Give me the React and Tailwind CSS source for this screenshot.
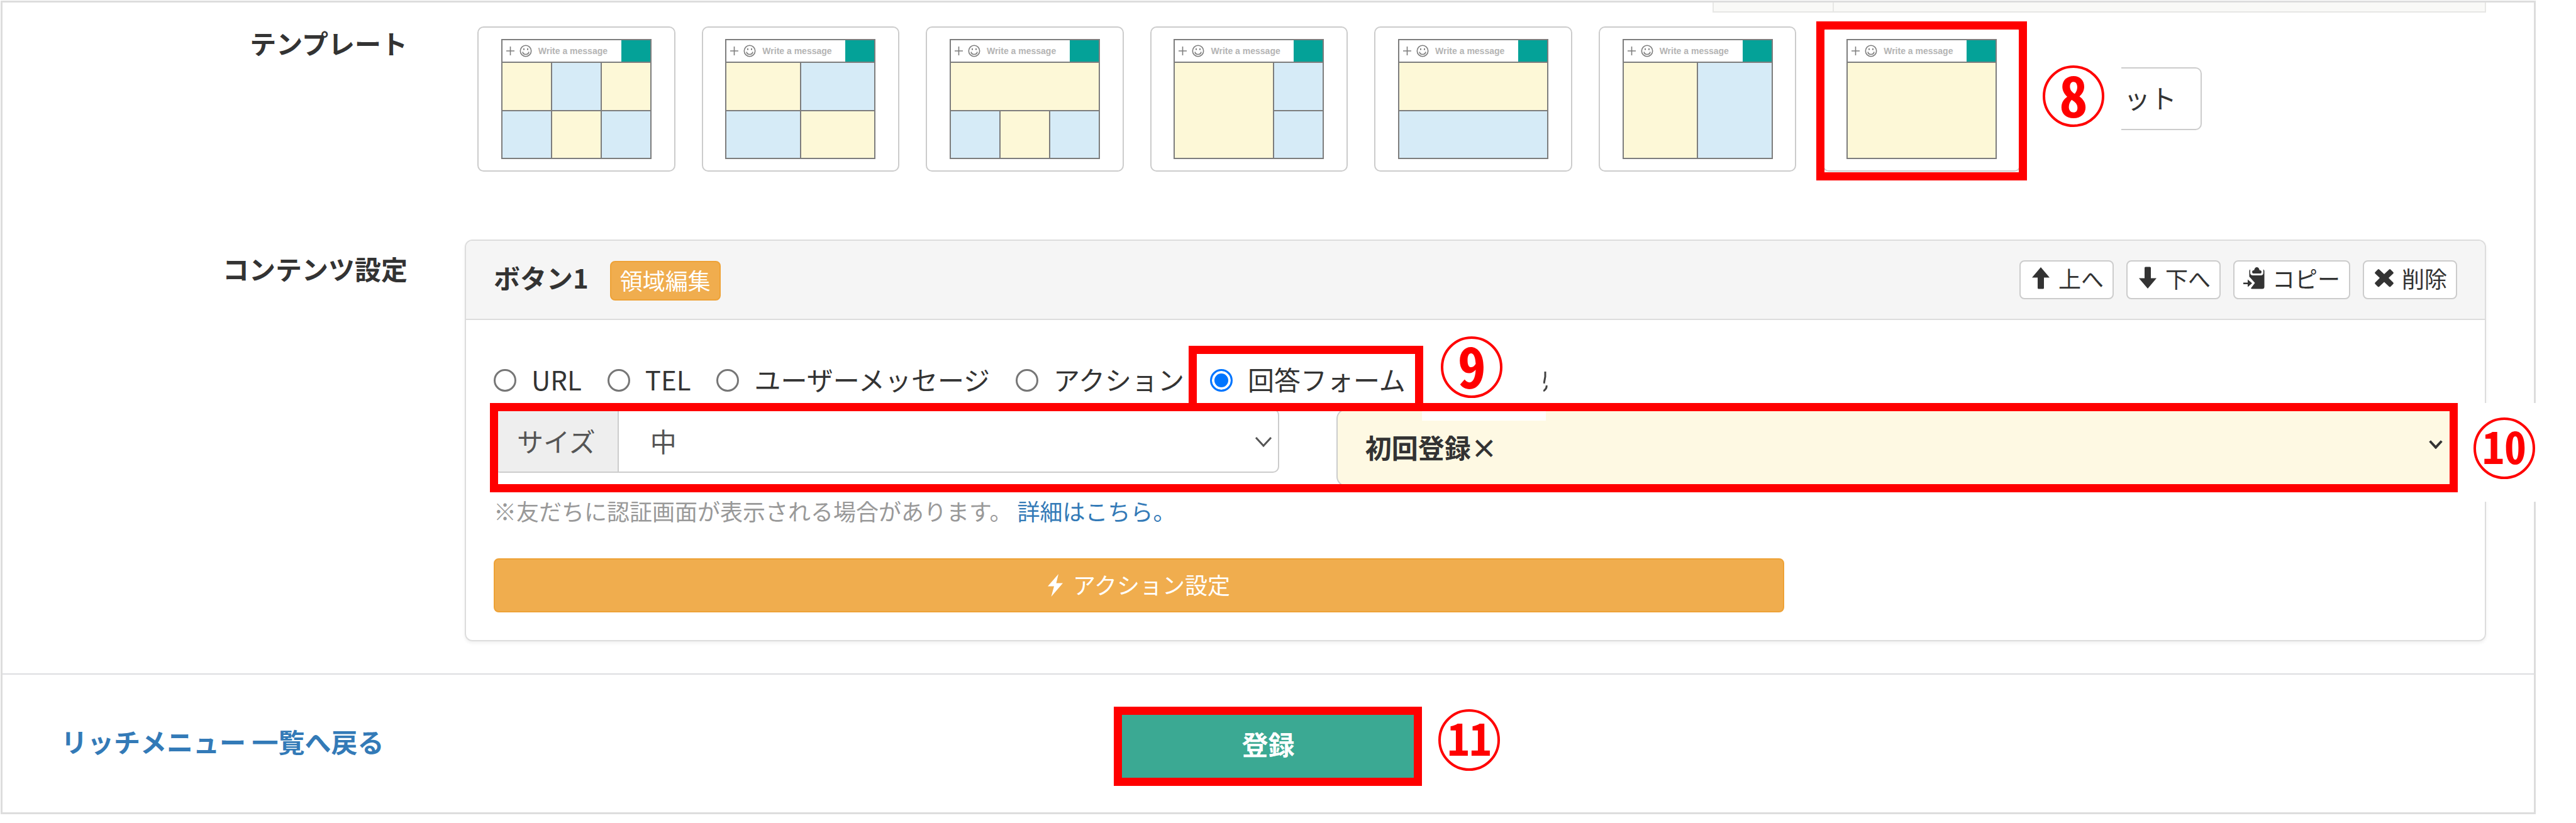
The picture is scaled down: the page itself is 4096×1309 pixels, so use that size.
import React, { useState } from "react";

const Y = "bg-[#fdf8d7]";
const B = "bg-[#d6ebf7]";

// area layouts of the rich menu, on a 6 x 2 grid
const TEMPLATES = [
  { id: "six", cells: [[Y, "col-span-2"], [B, "col-span-2"], [Y, "col-span-2"], [B, "col-span-2"], [Y, "col-span-2"], [B, "col-span-2"]] },
  { id: "four", cells: [[Y, "col-span-3"], [B, "col-span-3"], [B, "col-span-3"], [Y, "col-span-3"]] },
  { id: "top-three", cells: [[Y, "col-span-6"], [B, "col-span-2"], [Y, "col-span-2"], [B, "col-span-2"]] },
  { id: "left-two", cells: [[Y, "col-span-4 row-span-2"], [B, "col-span-2"], [B, "col-span-2"]] },
  { id: "rows", cells: [[Y, "col-span-6"], [B, "col-span-6"]] },
  { id: "columns", cells: [[Y, "col-span-3 row-span-2"], [B, "col-span-3 row-span-2"]] },
  { id: "single", cells: [[Y, "col-span-6 row-span-2"]] },
];

const TYPES = ["URL", "TEL", "ユーザーメッセージ", "アクション", "回答フォーム"];

function ArrowUp({ className }) {
  return (
    <svg viewBox="0 0 36 36" className={className} fill="currentColor" aria-hidden="true">
      <path d="M18 1 32 17.5H23V34q0 1.500-1.500 1.500H14.500q-1.500 0-1.500-1.500V17.500H4z" />
    </svg>
  );
}

function ArrowDown({ className }) {
  return (
    <svg viewBox="0 0 36 36" className={className} fill="currentColor" aria-hidden="true">
      <path d="M18 35 32 18.5H23V2q0-1.500-1.500-1.500H14.500q-1.500 0-1.500 1.500V18.500H4z" />
    </svg>
  );
}

function Paste({ className }) {
  return (
    <svg viewBox="0 0 36 36" className={className} fill="currentColor" aria-hidden="true">
      <path d="M16 11q-2 0-2-2.500t3.200-2.800q1-4.700 4.300-4.700t4.300 4.700q3.200.300 3.200 2.800t-2 2.500z" />
      <path d="M11 4.500q-1.500.700-1.500 2.500V16l9 10-6.500 8.500q.5 1 2 1H30q3.500 0 3.500-3.500V7q0-2-1.700-2.600V10q0 4-4 4H15.500q-4.500 0-4.500-4z" />
      <path d="M0 25.500H7V20.500l7 6-7 6v-4.500H0z" />
    </svg>
  );
}

function Remove({ className }) {
  return (
    <svg viewBox="0 0 36 36" className={className} fill="currentColor" aria-hidden="true">
      <path d="M10 4.500 18 12 26 4.500q1-.8 2 0l4.500 4.500q.8 1 0 2L25 18l7.500 7.500q.8 1 0 2L28 32q-1 .8-2 0L18 24.500 10 32q-1 .8-2 0L3.500 27.500q-.8-1 0-2L11 18 3.500 11q-.8-1 0-2L8 4.500q1-.8 2 0z" />
    </svg>
  );
}

function Bolt({ className }) {
  return (
    <svg viewBox="0 0 24 36" className={className} fill="currentColor" aria-hidden="true">
      <path d="M17 0 0 19.500H10L5.500 36 24 14.500H13.500z" />
    </svg>
  );
}

function Chevron({ className, strokeWidth }) {
  return (
    <svg viewBox="0 0 28 18" className={className} fill="none" stroke="currentColor" strokeWidth={strokeWidth} aria-hidden="true">
      <path d="M2 2 14 15 26 2" />
    </svg>
  );
}

// circled step number
function Mark({ children, className = "" }) {
  return (
    <span
      className={`absolute flex size-[98px] items-center justify-center rounded-full border-4 border-[#ff0000] pb-[10px] leading-none font-bold text-[#ff0000] [font-feature-settings:'hwid'] ${className}`}
    >
      {children}
    </span>
  );
}

function Frame({ className }) {
  return <span className={`pointer-events-none absolute border-[13px] border-[#ff0000] ${className}`} />;
}

function Thumb({ cells }) {
  return (
    <span className="flex h-[191px] w-[239px] flex-col gap-[2px] border-2 border-[#7d7d7d] bg-[#7d7d7d]">
      <span className="flex h-[34px] items-center bg-white pl-[5px]">
        <svg viewBox="0 0 44 20" className="h-5 w-11 shrink-0" fill="none" stroke="#7d7d7d" strokeWidth="1.6" aria-hidden="true">
          <path d="M1 10h13M7.500 3v14" />
          <circle cx="32" cy="10" r="8.700" />
          <path d="M27 11.500q.8 4 5 4t5-4" />
          <path d="M29 6v2.500M35 6v2.500" strokeWidth="2" />
        </svg>
        <span className="ml-2 flex-1 text-left font-['Liberation_Sans',Arial,sans-serif] text-[14px] leading-none font-bold whitespace-nowrap text-[#b4b4b4]">
          Write a message
        </span>
        <span className="h-full w-[46px] bg-[#04a298]" />
      </span>
      <span className="grid flex-1 grid-cols-6 grid-rows-2 gap-[2px]">
        {cells.map(([color, span], i) => (
          <span key={i} className={`${color} ${span}`} />
        ))}
      </span>
    </span>
  );
}

function TemplateRow() {
  const [selected, setSelected] = useState("single");

  return (
    <section className="flex pt-[22px]">
      <h2 className="-mt-1 w-[644px] shrink-0 text-right text-[42px] leading-[60px] font-bold">テンプレート</h2>
      <div className="ml-[111px] flex items-start">
        <div className="grid w-[2454px] shrink-0 grid-cols-7 gap-[42px]">
          {TEMPLATES.map((t) => (
            <button
              key={t.id}
              type="button"
              aria-label={`テンプレート ${t.id}`}
              aria-pressed={selected === t.id}
              onClick={() => setSelected(t.id)}
              className="relative flex h-[231px] items-center justify-center rounded-[10px] border-2 border-[#ccc] bg-white"
            >
              <Thumb cells={t.cells} />
              {selected === t.id ? <Frame className="-top-[10px] -right-[12px] -bottom-[16px] -left-[12px]" /> : null}
            </button>
          ))}
        </div>
        <div className="relative mt-[65px] ml-[160px]">
          <button
            type="button"
            className="h-[100px] rounded-r-[10px] border-2 border-l-0 border-[#ccc] bg-white pr-[38px] pb-1 pl-[4px] text-[42px] leading-[60px]"
          >
            ット
          </button>
          <Mark className="-top-[3px] -left-[125px] text-[90px]">8</Mark>
        </div>
      </div>
    </section>
  );
}

function SmallButton({ icon: Icon, children }) {
  return (
    <button
      type="button"
      className="flex h-[62px] items-center gap-[10px] rounded-[8px] border-2 border-[#ccc] bg-white px-[14px] pb-[6px] text-[36px] leading-[48px] text-[#333]"
    >
      <Icon className="size-9" />
      {children}
    </button>
  );
}

function ContentPanel() {
  const [type, setType] = useState("回答フォーム");

  return (
    <section className="mt-[108px] flex">
      <h2 className="mt-4 w-[644px] shrink-0 text-right text-[42px] leading-[60px] font-bold">コンテンツ設定</h2>
      <div className="mr-[76px] ml-[91px] flex-1 rounded-[12px] border-2 border-[#ddd] shadow-[0_3px_5px_rgba(0,0,0,0.06)]">
        <div className="flex h-[126px] items-center rounded-t-[10px] border-b-2 border-[#ddd] bg-[#f5f5f5] px-11">
          <h3 className="pb-2 text-[42px] leading-[60px] font-bold">ボタン1</h3>
          <button
            type="button"
            className="mt-[3px] ml-[34px] h-[63px] rounded-[8px] border-2 border-[#eea236] bg-[#f0ad4e] px-[14px] pb-1 text-[36px] leading-[48px] text-white"
          >
            領域編集
          </button>
          <div className="ml-auto flex gap-5">
            <SmallButton icon={ArrowUp}>上へ</SmallButton>
            <SmallButton icon={ArrowDown}>下へ</SmallButton>
            <SmallButton icon={Paste}>コピー</SmallButton>
            <SmallButton icon={Remove}>削除</SmallButton>
          </div>
        </div>

        <div className="px-11 pt-[66px] pb-11">
          <div className="relative flex h-[60px] items-center gap-[41px]">
            {TYPES.map((name) => (
              <label key={name} className="relative flex h-[60px] items-center gap-6 text-[42px] leading-[60px]">
                <input
                  type="radio"
                  name="type"
                  value={name}
                  checked={type === name}
                  onChange={() => setType(name)}
                  className="size-9 appearance-none rounded-full border-[3px] border-[#767676] bg-white checked:border-[#0075ff] checked:bg-[#0075ff] checked:shadow-[inset_0_0_0_4px_white]"
                />
                <span className="-mt-1">{name}</span>
                {type === name ? (
                  <>
                    <Frame className="-top-[25px] -right-[28px] -left-[34px] h-[104px]" />
                    <Mark className="-top-[40px] left-[367px] text-[90px]">9</Mark>
                    <svg viewBox="0 0 8 32" className="absolute top-4 left-[530px] h-8 w-2" fill="none" stroke="#444" strokeWidth="3" aria-hidden="true">
                      <path d="M3 0V8L1 19M5 22q1 5-5 9" />
                    </svg>
                  </>
                ) : null}
              </label>
            ))}
          </div>

          <div className="relative mt-[15px] flex items-start gap-[91px]">
            <div className="flex h-[102px] w-[40%] rounded-[10px] border-2 border-[#ccc] text-[42px] leading-[60px] text-[#555]">
              <label htmlFor="size" className="flex items-center rounded-l-[8px] border-r-2 border-[#ccc] bg-[#eee] px-[35px]">
                サイズ
              </label>
              <div className="relative flex-1">
                <select id="size" defaultValue="中" className="size-full appearance-none bg-transparent pl-[50px]">
                  <option>大</option>
                  <option>中</option>
                  <option>小</option>
                </select>
                <Chevron className="pointer-events-none absolute top-[42px] right-[9px] h-[18px] w-7" strokeWidth={3} />
              </div>
            </div>
            <div className="relative h-[124px] flex-1">
              <select
                aria-label="回答フォーム"
                className="size-full appearance-none rounded-[16px] border-2 border-[#ccc] bg-[#fef9e3] pb-1 pl-11 text-[42px] font-bold"
              >
                <option>初回登録×</option>
              </select>
              <span className="absolute top-0 left-[136px] h-[19px] w-[197px] bg-white" />
              <Chevron className="pointer-events-none absolute top-[50px] right-[23px] h-[14px] w-[22px]" strokeWidth={5} />
            </div>
            <Frame className="-top-[9px] -right-px -bottom-[9px] -left-[6px]" />
            {/* note on the right edge, it sits over both borders */}
            <span className="absolute -top-[9px] -right-[132px] h-[157px] w-[131px] bg-white" />
            <Mark className="top-[14px] -right-[124px] text-[70px]">10</Mark>
          </div>

          <p className="mt-[11px] text-[36px] leading-[54px] text-[#999]">
            ※友だちに認証画面が表示される場合があります。{" "}
            <a href="#detail" className="text-[#337ab7]">
              詳細はこちら。
            </a>
          </p>

          <button
            type="button"
            className="mt-[49px] flex h-[86px] w-[2052px] max-w-full items-center justify-center gap-4 rounded-[8px] border-2 border-[#eea236] bg-[#f0ad4e] text-[36px] leading-[54px] text-white"
          >
            <Bolt className="h-9 w-6" />
            <span className="-mt-1">アクション設定</span>
          </button>
        </div>
      </div>
    </section>
  );
}

export default function App() {
  return (
    <div className="bg-white pt-px pr-16 pb-[14px] pl-px font-['Noto_Sans_CJK_JP','Noto_Sans',sans-serif] text-[#333]">
      <main className="border-[3px] border-[#ddd]">
        <div className="mr-[76px] ml-auto flex h-4 w-[1230px] border-x-2 border-b-2 border-[#e7e7e5] bg-[#f9f9f7]">
          <div className="w-[191px] border-r-2 border-[#e7e7e5]" />
        </div>
        <TemplateRow />
        <ContentPanel />
        <footer className="mt-[51px] grid h-[221px] grid-cols-3 items-center border-t-2 border-[#dcdde0]">
          <a href="#list" className="-mt-2 ml-[93px] text-[42px] leading-[60px] font-bold text-[#337ab7]">
            リッチメニュー 一覧へ戻る
          </a>
          <div className="relative mt-2 justify-self-center">
            <button type="submit" className="block h-[112px] w-[478px] rounded-[10px] bg-[#3ba993] pb-2 text-[42px] leading-[60px] font-bold text-white">
              登録
            </button>
            <Frame className="-inset-x-[6px] -inset-y-[7px]" />
            <Mark className="-top-[3px] -right-[130px] text-[70px]">11</Mark>
          </div>
        </footer>
      </main>
    </div>
  );
}
